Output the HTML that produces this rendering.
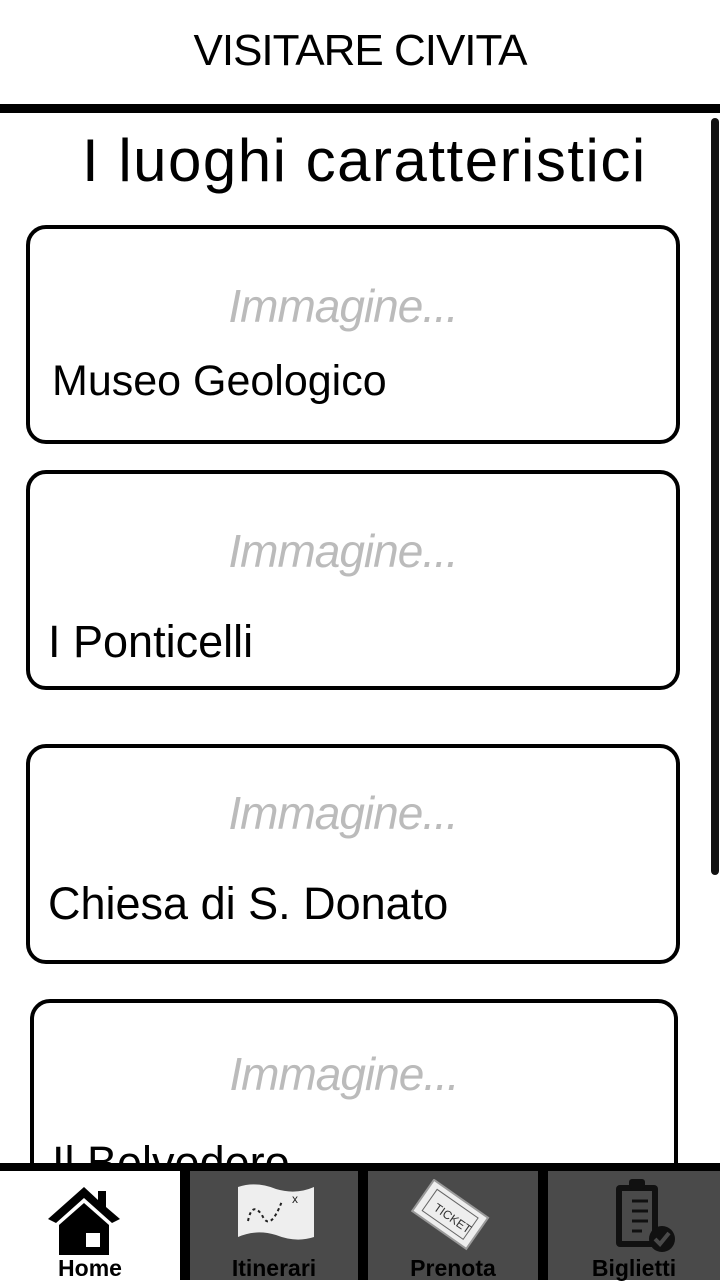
<!DOCTYPE html>
<html><head><meta charset="utf-8"><style>
body{margin:0;width:720px;height:1280px;overflow:hidden;background:#fff;font-family:"Liberation Sans",sans-serif;position:relative}
.a{position:absolute}
.card{position:absolute;left:26px;width:654px;border:4px solid #000;border-radius:20px;background:#fff;box-sizing:border-box}
.img{position:absolute;left:0;width:100%;text-align:center;color:#bbb;font-style:italic;font-size:46px;letter-spacing:-1px;padding-right:20px;box-sizing:border-box}
.lbl{position:absolute;font-size:45px;color:#000;white-space:nowrap}
.tab{position:absolute;top:1171px;height:109px;background:#4a4a4a}
.tl{position:absolute;bottom:-2px;width:100%;text-align:center;font-weight:bold;font-size:23px;color:#000}
</style></head><body>
<div class="a" style="left:0;width:720px;top:26px;text-align:center;font-size:44px;letter-spacing:-1px">VISITARE CIVITA</div>
<div class="a" style="left:0;top:104px;width:720px;height:9px;background:#000"></div>
<div class="a" style="left:82px;top:126px;font-size:60px;letter-spacing:1.5px">I luoghi caratteristici</div>
<div class="a" style="left:711px;top:118px;width:8px;height:757px;background:#111;border-radius:4px"></div>

<div class="card" style="top:225px;height:219px"><div class="img" style="top:50px">Immagine...</div><div class="lbl" style="left:22px;top:128px;font-size:43px">Museo Geologico</div></div>
<div class="card" style="top:470px;height:220px"><div class="img" style="top:50px">Immagine...</div><div class="lbl" style="left:18px;top:142px">I Ponticelli</div></div>
<div class="card" style="top:744px;height:220px"><div class="img" style="top:38px">Immagine...</div><div class="lbl" style="left:18px;top:130px">Chiesa di S. Donato</div></div>
<div class="card" style="top:999px;height:240px;left:30px;width:648px"><div class="img" style="top:44px">Immagine...</div><div class="lbl" style="left:18px;top:134px">Il Belvedero</div></div>

<div class="a" style="left:0;top:1163px;width:720px;height:117px;background:#000"></div>
<div class="tab" style="left:0;width:180px;background:#fff">
<svg class="a" style="left:46px;top:14px" width="76" height="70" viewBox="0 0 76 70"><path d="M38 2 L2 34 L10 38 L38 13 L66 38 L74 34 L60 22 L60 6 L52 6 L52 15 Z" fill="#000"/><path d="M13 40 L38 18 L63 40 L63 70 L13 70 Z" fill="#000"/><rect x="40" y="48" width="14" height="14" fill="#fff"/><rect x="22" y="50" width="12" height="20" fill="#000"/></svg>
<div class="tl">Home</div></div>
<div class="tab" style="left:190px;width:168px">
<svg class="a" style="left:46px;top:10px" width="80" height="60"><path d="M2 6 Q20 0 40 8 Q60 14 78 6 L78 56 Q60 62 40 54 Q20 48 2 56 Z" fill="#eee"/><path d="M12 40 Q16 20 26 34 Q34 52 46 20" stroke="#222" stroke-width="2" stroke-dasharray="3 3" fill="none"/><text x="56" y="22" font-size="12" fill="#222">x</text></svg>
<div class="tl">Itinerari</div></div>
<div class="tab" style="left:368px;width:170px">
<svg class="a" style="left:36px;top:8px" width="90" height="74"><g transform="rotate(35 45 37)"><rect x="12" y="16" width="66" height="38" fill="#eee" stroke="#999" stroke-width="2"/><rect x="20" y="22" width="50" height="26" fill="none" stroke="#666"/><text x="28" y="41" font-size="12" fill="#333">TICKET</text></g></svg>
<div class="tl">Prenota</div></div>
<div class="tab" style="left:548px;width:172px">
<svg class="a" style="left:64px;top:6px" width="66" height="78"><rect x="4" y="8" width="42" height="62" rx="4" fill="#111"/><rect x="10" y="14" width="30" height="50" fill="#4a4a4a"/><rect x="17" y="2" width="16" height="10" rx="3" fill="#111"/><g stroke="#111" stroke-width="3"><line x1="20" y1="24" x2="36" y2="24"/><line x1="20" y1="34" x2="36" y2="34"/><line x1="20" y1="44" x2="36" y2="44"/><line x1="20" y1="54" x2="30" y2="54"/></g><circle cx="50" cy="62" r="13" fill="#111"/><path d="M43 62 L48 67 L57 56" stroke="#4a4a4a" stroke-width="4" fill="none"/></svg>
<div class="tl">Biglietti</div></div>
</body></html>
